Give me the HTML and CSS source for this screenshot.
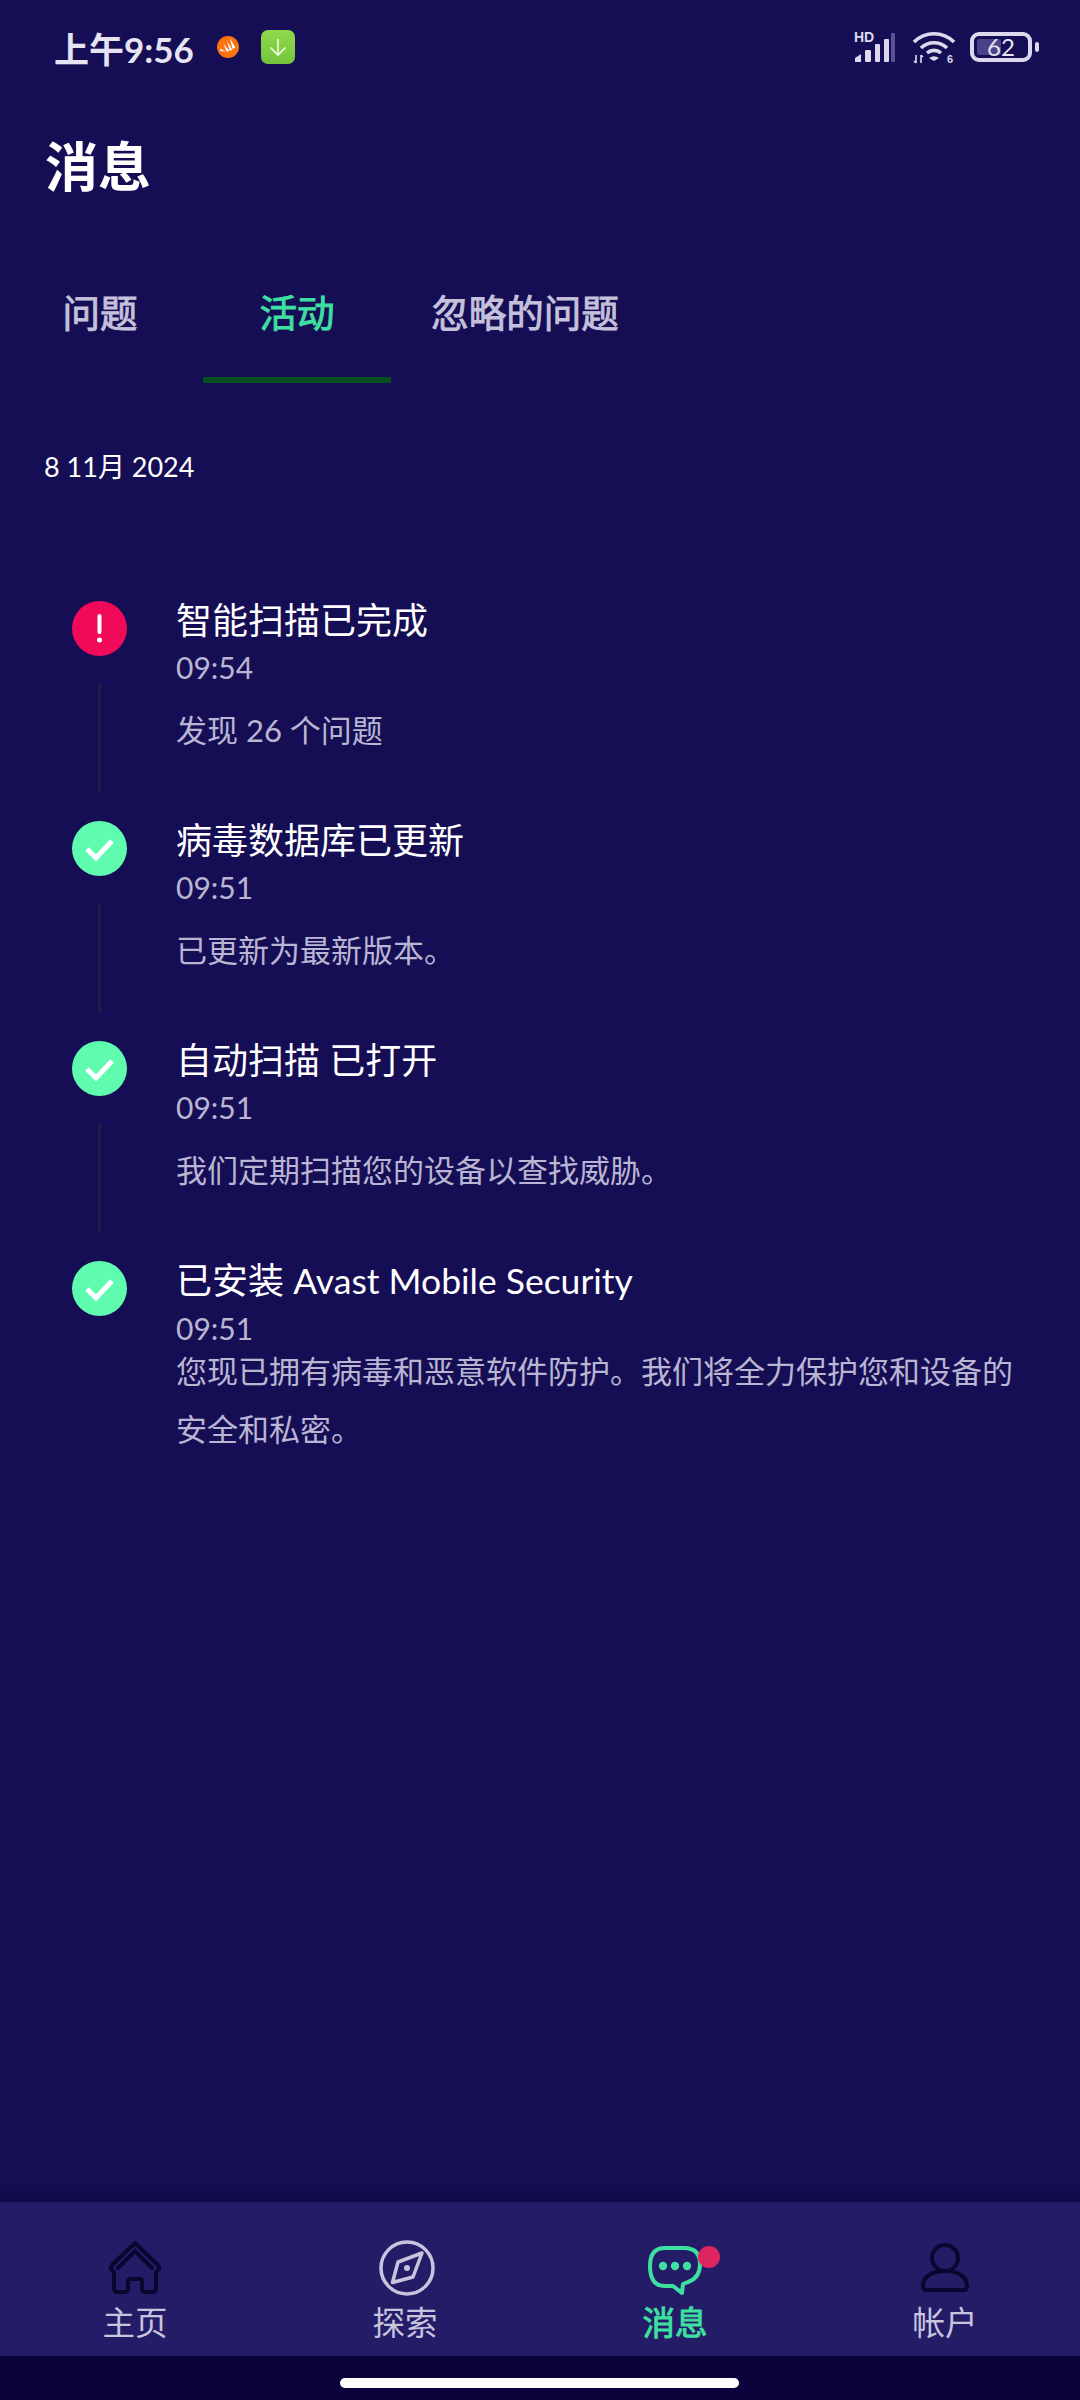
FILE: index.html
```html
<!DOCTYPE html>
<html lang="zh-CN">
<head>
    <meta charset="UTF-8">
    <title>消息</title>
    <link rel="stylesheet" href="styles.css">
</head>
<body>
<div class="page">

    <div class="statusbar">
        <div class="status-left">
            <span class="clock">上午9:56</span>
            <svg class="app-orange" viewBox="0 0 22 22">
                <circle cx="11" cy="11" r="11" fill="#f9730f"/>
                <path d="M13 2.500 L18.500 11.500 L15.500 13 Z M10 5 L15.500 14 L12.500 14.500 Z M6.500 8 L12.500 15 L9.500 15.500 Z M3 12.500 L9 15.500 L3.500 15 Z" fill="#fff"/>
            </svg>
            <svg class="app-green" viewBox="0 0 34 34">
                <defs>
                    <linearGradient id="greenfill" x1="0" y1="0" x2="0" y2="1">
                        <stop offset="0" stop-color="#90d84c"/>
                        <stop offset="1" stop-color="#74c53c"/>
                    </linearGradient>
                </defs>
                <rect width="34" height="34" rx="7" fill="url(#greenfill)"/>
                <path d="M17 9 V25 M9.500 17.500 L17 25 L24.500 17.500" fill="none" stroke="#f2fbe6" stroke-width="1.600"/>
            </svg>
        </div>
        <div class="status-right">
            <svg class="signal" width="42" height="34" viewBox="0 0 42 34">
                <text x="0" y="12" class="hd">HD</text>
                <path d="M1 32 V28 L7 24 V32 Z" fill="#dcd9ec"/>
                <rect x="11" y="20" width="6" height="12" rx="1" fill="#dcd9ec"/>
                <rect x="21" y="14" width="5" height="18" rx="1" fill="#dcd9ec"/>
                <rect x="30" y="9" width="5" height="23" rx="1" fill="#dcd9ec"/>
                <rect x="37" y="3" width="4" height="29" rx="1" fill="#5a5390"/>
            </svg>
            <svg class="wifi" width="44" height="34" viewBox="0 0 44 34">
                <path d="M2 12 C13 1 31 1 42 12 M9 18 C16 11 28 11 35 18 M15 23 C19 19.500 25 19.500 29 23" fill="none" stroke="#dcd9ec" stroke-width="3.600"/>
                <path d="M17 28 Q22 24.500 27 28 L22 31 Z" fill="#dcd9ec"/>
                <path d="M4 25 V33 M2 31 L4 33 M9 33 V25 M9 25 L11 27" fill="none" stroke="#dcd9ec" stroke-width="1.600"/>
                <text x="35" y="33" class="wifi-six">6</text>
            </svg>
            <div class="battery">
                <div class="battery-fill"></div>
                <span class="battery-num">62</span>
            </div>
        </div>
    </div>

    <h1 class="title">消息</h1>

    <div class="tabs">
        <div class="tab">问题</div>
        <div class="tab tab-active">活动</div>
        <div class="tab tab-wide">忽略的问题</div>
    </div>

    <div class="date">8 11月 2024</div>

    <div class="timeline">
        <div class="item">
            <div class="marker">
                <div class="dot dot-alert">
                    <svg width="55" height="55" viewBox="0 0 55 55">
                        <rect x="25.500" y="13" width="4" height="20" rx="2" fill="#fff"/>
                        <circle cx="27.500" cy="39" r="2.500" fill="#fff"/>
                    </svg>
                </div>
                <div class="link"></div>
            </div>
            <div class="body">
                <div class="item-title">智能扫描已完成</div>
                <div class="item-time">09:54</div>
                <div class="item-desc">发现 26 个问题</div>
            </div>
        </div>

        <div class="item">
            <div class="marker">
                <div class="dot dot-ok">
                    <svg width="55" height="55" viewBox="0 0 55 55">
                        <path d="M15 28 L24 37 L40 20" fill="none" stroke="#fff" stroke-width="5"/>
                    </svg>
                </div>
                <div class="link"></div>
            </div>
            <div class="body">
                <div class="item-title">病毒数据库已更新</div>
                <div class="item-time">09:51</div>
                <div class="item-desc">已更新为最新版本。</div>
            </div>
        </div>

        <div class="item">
            <div class="marker">
                <div class="dot dot-ok">
                    <svg width="55" height="55" viewBox="0 0 55 55">
                        <path d="M15 28 L24 37 L40 20" fill="none" stroke="#fff" stroke-width="5"/>
                    </svg>
                </div>
                <div class="link"></div>
            </div>
            <div class="body">
                <div class="item-title">自动扫描 已打开</div>
                <div class="item-time">09:51</div>
                <div class="item-desc">我们定期扫描您的设备以查找威胁。</div>
            </div>
        </div>

        <div class="item">
            <div class="marker">
                <div class="dot dot-ok">
                    <svg width="55" height="55" viewBox="0 0 55 55">
                        <path d="M15 28 L24 37 L40 20" fill="none" stroke="#fff" stroke-width="5"/>
                    </svg>
                </div>
            </div>
            <div class="body">
                <div class="item-title">已安装 <span class="latin">Avast Mobile Security</span></div>
                <div class="item-time">09:51</div>
                <div class="item-desc item-desc-tight">您现已拥有病毒和恶意软件防护。我们将全力保护您和设备的安全和私密。</div>
            </div>
        </div>
    </div>

    <div class="nav-shadow"></div>
    <div class="nav">
        <div class="nav-item">
            <svg class="nav-icon" width="56" height="56" viewBox="0 0 56 56">
                <path d="M28 3 L51 25 Q53.500 28 51 30 L49 32 V48 Q49 52 45 52 H38 Q35 52 35 49 V41 Q35 39 33 39 H23 Q21 39 21 41 V49 Q21 52 18 52 H11 Q7 52 7 48 V32 L5 30 Q2.500 28 5 25 Z" fill="none" stroke="#0b0630" stroke-width="4" stroke-linejoin="round"/>
                <path d="M11 28 L28 11 L45 28" fill="none" stroke="#0b0630" stroke-width="4" stroke-linecap="round"/>
            </svg>
            <span class="nav-label">主页</span>
        </div>
        <div class="nav-item">
            <svg class="nav-icon nav-icon-compass" width="56" height="56" viewBox="0 0 56 56">
                <circle cx="28" cy="28" r="26" fill="none" stroke="#c8c4de" stroke-width="3.500"/>
                <path d="M43 13 L34 37 L13.500 42.500 L19 22 Z" fill="none" stroke="#c8c4de" stroke-width="3.500" stroke-linejoin="round"/>
                <circle cx="28" cy="28" r="3" fill="#c8c4de"/>
            </svg>
            <span class="nav-label">探索</span>
        </div>
        <div class="nav-item nav-item-active">
            <svg class="nav-icon" width="56" height="56" viewBox="0 0 56 56">
                <path d="M18 8 H37 Q53 8 53 24 Q53 38 41 42 L36 44 L35 53 L26 46 H18 Q3 46 3 26 Q3 8 18 8 Z" fill="none" stroke="#3ee0a1" stroke-width="4" stroke-linejoin="round"/>
                <circle cx="16" cy="26" r="4.200" fill="#3ee0a1"/>
                <circle cx="28" cy="26" r="4.200" fill="#3ee0a1"/>
                <circle cx="40" cy="26" r="4.200" fill="#3ee0a1"/>
            </svg>
            <span class="badge"></span>
            <span class="nav-label">消息</span>
        </div>
        <div class="nav-item">
            <svg class="nav-icon" width="56" height="56" viewBox="0 0 56 56">
                <circle cx="28" cy="18" r="13" fill="none" stroke="#0b0630" stroke-width="4"/>
                <path d="M6 46 C6 36 16 31 28 31 C40 31 50 36 50 46 Q50 50 47 50 H9 Q6 50 6 46 Z" fill="none" stroke="#0b0630" stroke-width="4"/>
            </svg>
            <span class="nav-label">帐户</span>
        </div>
    </div>
    <div class="homebar">
        <div class="home-pill"></div>
    </div>

</div>
</body>
</html>
```

FILE: styles.css
```css
*{
    margin: 0;
    padding: 0;
    box-sizing: border-box;
}
body{
    background: #160e54;
    font-family: "Lato", "Noto Sans CJK SC", sans-serif;
}
.page{
    width: 1080px;
    height: 2400px;
    display: flex;
    flex-direction: column;
    background: #160e54;
    overflow: hidden;
}

/* status bar */
.statusbar{
    height: 96px;
    padding: 0 42px 2px 54px;
    display: flex;
    justify-content: space-between;
    align-items: center;
}
.status-left{
    display: flex;
    align-items: center;
}
.clock{
    font-size: 35px;
    font-weight: 700;
    color: #e6e4f2;
    width: 163px;
    white-space: nowrap;
}
.app-orange{
    width: 22px;
    height: 22px;
}
.app-green{
    width: 34px;
    height: 34px;
    margin-left: 22px;
}
.status-right{
    display: flex;
    align-items: center;
}
.signal{
    margin-right: 16px;
}
.hd{
    font-family: "Liberation Sans", sans-serif;
    font-size: 14px;
    font-weight: 700;
    fill: #dcd9ec;
}
.wifi-six{
    font-family: "Liberation Sans", sans-serif;
    font-size: 11px;
    font-weight: 700;
    fill: #dcd9ec;
}
.battery{
    position: relative;
    width: 62px;
    height: 30px;
    margin-left: 14px;
    margin-right: 6px;
    border: 4px solid #dcd9ec;
    border-radius: 9px;
    display: flex;
    align-items: center;
    justify-content: center;
}
.battery::after{
    content: '';
    position: absolute;
    right: -11px;
    top: 6px;
    width: 4px;
    height: 10px;
    border-radius: 2px;
    background: #dcd9ec;
}
.battery-fill{
    position: absolute;
    left: 3px;
    top: 3px;
    bottom: 3px;
    width: 24px;
    border-radius: 2px;
    background: #4a4389;
}
.battery-num{
    position: relative;
    font-size: 24px;
    line-height: 22px;
    color: #e6e4f2;
}

.title{
    margin: 36px 0 0 45px;
    height: 70px;
    font-size: 53px;
    line-height: 70px;
    font-weight: 700;
    color: #fff;
}

/* tabs */
.tabs{
    margin-top: 91px;
    height: 90px;
    padding-left: 6px;
    display: flex;
    gap: 9px;
    border-bottom: 1px solid #1a1349;
}
.tab{
    width: 188px;
    height: 90px;
    font-size: 37.500px;
    line-height: 40px;
    text-align: center;
    color: #c5c1dc;
    -webkit-text-stroke: 0.9px currentColor;
}
.tab-wide{
    width: 250px;
}
.tab-active{
    color: #3ee0a1;
    border-bottom: 6px solid #03501f;
    border-radius: 6px 6px 0 0;
}

.date{
    margin: 66px 0 0 44px;
    height: 36px;
    font-size: 27px;
    line-height: 36px;
    color: #fff;
}

/* timeline */
.timeline{
    margin-top: 115px;
    padding-left: 72px;
    display: flex;
    flex-direction: column;
}
.item{
    min-height: 220px;
    display: flex;
}
.marker{
    width: 104px;
    flex-shrink: 0;
    padding-top: 1px;
}
.dot{
    width: 55px;
    height: 55px;
    border-radius: 50%;
}
.dot svg{
    display: block;
}
.dot-alert{
    background: #f20a5a;
}
.dot-ok{
    background: #5ffbae;
}
.link{
    width: 3px;
    height: 110px;
    margin: 27px 0 0 26px;
    background: #1f1c42;
}
.body{
    width: 840px;
}
.item-title{
    font-size: 36px;
    line-height: 40px;
    color: #fff;
}
.latin{
    font-size: 35.500px;
}
.item-time{
    margin-top: 9px;
    font-size: 30px;
    line-height: 36px;
    color: #b9b5d3;
}
.item-desc{
    margin-top: 16px;
    font-size: 31px;
    line-height: 58px;
    color: #b9b5d3;
}
.item-desc-tight{
    margin-top: -4px;
}

/* bottom nav */
.nav-shadow{
    margin-top: auto;
    height: 22px;
    background: linear-gradient(#160e54, #110a48);
}
.nav{
    height: 154px;
    display: grid;
    grid-template-columns: repeat(4, 1fr);
    background: #251c68;
}
.nav-item{
    position: relative;
    padding-top: 38px;
    display: flex;
    flex-direction: column;
    align-items: center;
}
.nav-icon{
    display: block;
    flex-shrink: 0;
}
.nav-icon-compass{
    transform: translateX(2px);
}
.nav-label{
    margin-top: 5px;
    font-size: 32.500px;
    line-height: 44px;
    color: #c8c4de;
}
.nav-item-active .nav-label{
    color: #3ee0a1;
    -webkit-text-stroke: 0.9px currentColor;
}
.badge{
    position: absolute;
    left: 158px;
    top: 44px;
    width: 22px;
    height: 22px;
    border-radius: 50%;
    background: #df2560;
}
.homebar{
    height: 44px;
    padding-top: 22px;
    background: #0b033b;
}
.home-pill{
    width: 399px;
    height: 10px;
    margin-left: 340px;
    border-radius: 5px;
    background: #fff;
}
```
